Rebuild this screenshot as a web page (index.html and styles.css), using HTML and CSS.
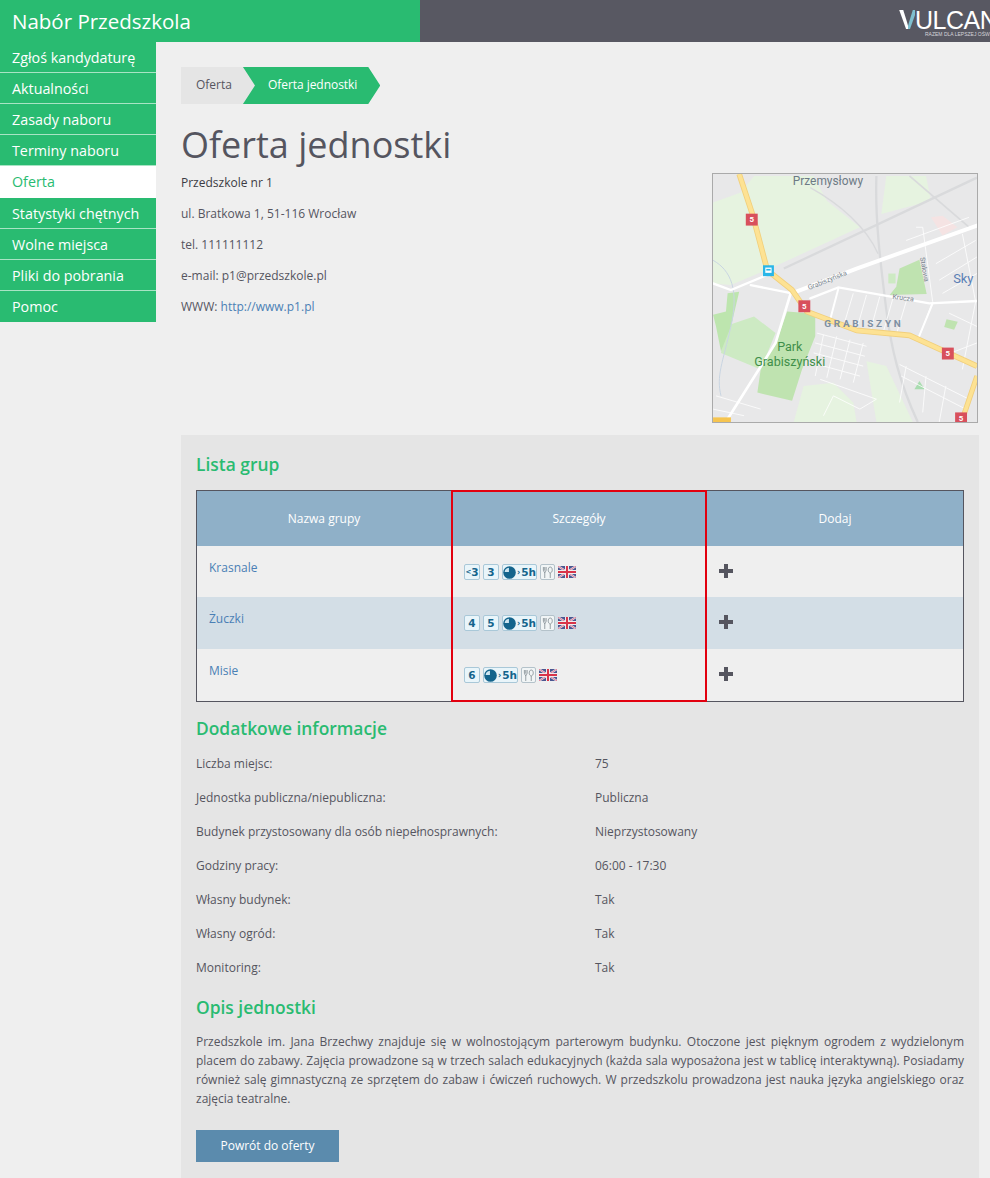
FILE: index.html
```html
<!DOCTYPE html>
<html lang="pl">
<head>
<meta charset="utf-8">
<title>Nabór Przedszkola</title>
<link rel="stylesheet" href="styles.css">
</head>
<body>
<header class="topbar">
  <div class="brand">Nabór Przedszkola</div>
  <div class="logo-area">
    <div class="logo">
      <div class="logo-word"><span class="logo-v">V</span>ULCAN</div>
      <div class="logo-tag">RAZEM DLA LEPSZEJ OŚWIATY</div>
    </div>
  </div>
</header>
<div class="main">
  <nav class="sidebar">
    <a class="nav-item">Zgłoś kandydaturę</a>
    <a class="nav-item">Aktualności</a>
    <a class="nav-item">Zasady naboru</a>
    <a class="nav-item">Terminy naboru</a>
    <a class="nav-item active">Oferta</a>
    <a class="nav-item">Statystyki chętnych</a>
    <a class="nav-item">Wolne miejsca</a>
    <a class="nav-item">Pliki do pobrania</a>
    <a class="nav-item">Pomoc</a>
  </nav>
  <main class="content">
    <div class="crumbs">
      <span class="crumb">Oferta</span>
      <span class="crumb current">Oferta jednostki</span>
    </div>
    <h1 class="page-title">Oferta jednostki</h1>
    <section class="info">
      <div class="info-text">
        <p class="unit-name">Przedszkole nr 1</p>
        <p>ul. Bratkowa 1, 51-116 Wrocław</p>
        <p>tel. 111111112</p>
        <p>e-mail: p1@przedszkole.pl</p>
        <p>WWW: <a class="link">http://www.p1.pl</a></p>
      </div>
      <svg class="map" viewBox="6 9 798 750" role="img" aria-label="Mapa">
        <rect x="6" y="9" width="798" height="750" fill="#e8e8e9"/>
        <path d="M6 95L90 65L130 15H310L350 90L450 170L200 285L60 345L6 340Z" fill="#e6f3e0"/>
        <path d="M530 15H650L665 90L515 130Z" fill="#e6f3e0"/>
        <path d="M280 650L370 640L430 700L440 759H250Z" fill="#e6f3e0"/>
        <path d="M470 575L530 590L610 759H500Z" fill="#e6f3e0"/>
        <path d="M40 470L130 440L195 490L150 600L30 550Z" fill="#cdeac3"/>
        <path d="M6 435L45 425L50 370L85 365L60 470L30 545L15 470Z" fill="#bde5ae"/>
        <path d="M230 425L315 432L315 500L275 600L245 695L140 670L150 600L200 510Z" fill="#bfe3b0"/>
        <path d="M570 295L630 268L652 372L540 375L560 350Z" fill="#bfe3b0"/>
        <path d="M536 310H558V340H536Z" fill="#cdeac3"/>
        <path d="M712 448L746 456L735 480L705 472Z" fill="#bfe3b0"/>
        <path d="M630 635L646 660H615Z" fill="#a9dcb0"/>
        <path d="M665 140L700 135L745 170L700 195Z" fill="#f5e3e3"/>
        <g fill="none" stroke="#d9dadc">
          <path d="M220 295L804 20" stroke-width="7"/>
          <path d="M500 15C495 150 515 300 530 420S570 640 625 759" stroke-width="7"/>
          <path d="M300 50C390 100 470 170 505 250" stroke-width="4"/>
          <path d="M600 15L780 170" stroke-width="5"/>
          <path d="M6 270C60 300 85 360 60 470S15 620 30 680" stroke="#c8d5e2" stroke-width="3"/>
        </g>
        <g class="map-minor">
          <path d="M320 490L470 530M315 520L465 560M310 550L460 590M305 580L450 620M340 495L315 620M380 500L350 625M420 510L390 630M460 520L430 640"/>
          <path d="M430 370L400 470M470 375L440 480M510 380L480 490M550 385L520 490M590 395L560 495"/>
          <path d="M570 585L780 690M575 620L770 720M590 590L570 700M650 620L640 730M710 650L690 759"/>
          <path d="M620 170L640 170L670 395L630 500M590 210L780 140M680 280L800 210M690 330L804 260M700 370L804 310M760 190L800 395L760 600M720 430L804 470M700 560L804 520"/>
          <path d="M330 630L500 690L450 720L370 680L340 740M15 680L150 720M6 720L100 740"/>
        </g>
        <g fill="none" stroke="#fff" stroke-linecap="round">
          <path d="M250 368L440 295L804 165" stroke-width="12"/>
          <path d="M300 385L385 352L660 400L804 393" stroke-width="7"/>
          <path d="M240 372L195 520L50 750" stroke-width="8"/>
          <path d="M6 340L60 360L175 312M120 345L245 370" stroke-width="7"/>
          <path d="M385 355L360 450" stroke-width="6"/>
          <path d="M670 400L625 510" stroke-width="6"/>
        </g>
        <g fill="none" stroke-linejoin="round">
          <path d="M85 9L125 130L170 300L245 360L290 425L440 482L600 497L804 590" stroke="#f1cf7c" stroke-width="17"/>
          <path d="M85 9L125 130L170 300L245 360L290 425L440 482L600 497L804 590" stroke="#fde293" stroke-width="12"/>
          <path d="M804 620L762 745" stroke="#f1cf7c" stroke-width="16"/>
          <path d="M804 620L762 745" stroke="#fde293" stroke-width="11"/>
        </g>
        <rect x="6" y="745" width="54" height="14" fill="#f6c44f"/>
        <rect x="157" y="285" width="33" height="33" fill="#29b6e8"/>
        <path d="M164 292H183V308H164Z" fill="#fff"/>
        <path d="M167 296H180V301H167Z" fill="#29b6e8"/>
        <g fill="#d8505c">
          <rect x="105" y="129" width="36" height="36"/>
          <rect x="264" y="391" width="36" height="36"/>
          <rect x="698" y="534" width="36" height="36"/>
          <rect x="738" y="730" width="36" height="29"/>
        </g>
        <g class="map-shield">
          <text x="123" y="155">5</text>
          <text x="282" y="417">5</text>
          <text x="716" y="560">5</text>
          <text x="756" y="755">5</text>
        </g>
        <text class="map-label" x="247" y="43">Przemysłowy</text>
        <text class="map-district" x="342" y="472">GRABISZYN</text>
        <text class="map-park" x="238" y="543" text-anchor="middle">Park</text>
        <text class="map-park" x="238" y="589" text-anchor="middle">Grabiszyński</text>
        <text class="map-sky" x="732" y="338">Sky</text>
        <text class="map-street" transform="translate(296 360) rotate(-22)">Grabiszyńska</text>
        <text class="map-street" transform="translate(548 386) rotate(8)">Krucza</text>
        <text class="map-street" transform="translate(632 262) rotate(80)">Stalowa</text>
      </svg>
    </section>
    <section class="panel">
      <h3 class="section-title first">Lista grup</h3>
      <div class="table-wrap">
        <table class="groups">
          <thead>
            <tr><th class="col-name">Nazwa grupy</th><th class="col-detail">Szczegóły</th><th class="col-add">Dodaj</th></tr>
          </thead>
          <tbody>
            <tr class="row-a">
              <td><a class="link">Krasnale</a></td>
              <td class="details-cell">
                <div class="badges">
                  <span class="badge age"><span class="lt">&lt;</span>3</span><span class="badge age">3</span>
                  <span class="badge hours"><svg class="pie" viewBox="0 0 12 12"><circle cx="6" cy="6" r="5.800" fill="#14648c"/><path d="M5.500 5.500H1.500A4.500 4.500 0 0 1 5.500 1.500Z" fill="#cfe6f1"/></svg><span class="gt">›</span>5h</span>
                  <span class="badge meal"><svg class="cutlery" viewBox="0 0 12 14"><path d="M1.500 1V4.500C1.500 6 3 6.500 3 7.500V13M4.500 1V4.500C4.500 6 3 6.500 3 7.500M3 1V5M9 1C7.200 1 6.800 3 6.800 4.500S8 7.500 9 7.500S11.200 6 11.200 4.500S10.800 1 9 1ZM9 7.500V13" fill="none" stroke="#8d979d" stroke-width="1"/></svg></span>
                  <svg class="flag" viewBox="0 0 18 12"><rect width="18" height="12" fill="#4a5690"/><path d="M0 0L18 12M18 0L0 12" stroke="#e8e8ee" stroke-width="2"/><path d="M0 0L18 12M18 0L0 12" stroke="#d46" stroke-width=".7"/><path d="M9 0V12M0 6H18" stroke="#eee" stroke-width="4"/><path d="M9 0V12M0 6H18" stroke="#d8344a" stroke-width="2"/></svg>
                </div>
              </td>
              <td><svg class="plus" viewBox="0 0 14 14"><path d="M5 0H9V5H14V9H9V14H5V9H0V5H5Z" fill="#55555f"/></svg></td>
            </tr>
            <tr class="alt">
              <td><a class="link">Żuczki</a></td>
              <td class="details-cell">
                <div class="badges">
                  <span class="badge age">4</span><span class="badge age">5</span>
                  <span class="badge hours"><svg class="pie" viewBox="0 0 12 12"><circle cx="6" cy="6" r="5.800" fill="#14648c"/><path d="M5.500 5.500H1.500A4.500 4.500 0 0 1 5.500 1.500Z" fill="#cfe6f1"/></svg><span class="gt">›</span>5h</span>
                  <span class="badge meal"><svg class="cutlery" viewBox="0 0 12 14"><path d="M1.500 1V4.500C1.500 6 3 6.500 3 7.500V13M4.500 1V4.500C4.500 6 3 6.500 3 7.500M3 1V5M9 1C7.200 1 6.800 3 6.800 4.500S8 7.500 9 7.500S11.200 6 11.200 4.500S10.800 1 9 1ZM9 7.500V13" fill="none" stroke="#8d979d" stroke-width="1"/></svg></span>
                  <svg class="flag" viewBox="0 0 18 12"><rect width="18" height="12" fill="#4a5690"/><path d="M0 0L18 12M18 0L0 12" stroke="#e8e8ee" stroke-width="2"/><path d="M0 0L18 12M18 0L0 12" stroke="#d46" stroke-width=".7"/><path d="M9 0V12M0 6H18" stroke="#eee" stroke-width="4"/><path d="M9 0V12M0 6H18" stroke="#d8344a" stroke-width="2"/></svg>
                </div>
              </td>
              <td><svg class="plus" viewBox="0 0 14 14"><path d="M5 0H9V5H14V9H9V14H5V9H0V5H5Z" fill="#55555f"/></svg></td>
            </tr>
            <tr>
              <td><a class="link">Misie</a></td>
              <td class="details-cell">
                <div class="badges">
                  <span class="badge age">6</span>
                  <span class="badge hours"><svg class="pie" viewBox="0 0 12 12"><circle cx="6" cy="6" r="5.800" fill="#14648c"/><path d="M5.500 5.500H1.500A4.500 4.500 0 0 1 5.500 1.500Z" fill="#cfe6f1"/></svg><span class="gt">›</span>5h</span>
                  <span class="badge meal"><svg class="cutlery" viewBox="0 0 12 14"><path d="M1.500 1V4.500C1.500 6 3 6.500 3 7.500V13M4.500 1V4.500C4.500 6 3 6.500 3 7.500M3 1V5M9 1C7.200 1 6.800 3 6.800 4.500S8 7.500 9 7.500S11.200 6 11.200 4.500S10.800 1 9 1ZM9 7.500V13" fill="none" stroke="#8d979d" stroke-width="1"/></svg></span>
                  <svg class="flag" viewBox="0 0 18 12"><rect width="18" height="12" fill="#4a5690"/><path d="M0 0L18 12M18 0L0 12" stroke="#e8e8ee" stroke-width="2"/><path d="M0 0L18 12M18 0L0 12" stroke="#d46" stroke-width=".7"/><path d="M9 0V12M0 6H18" stroke="#eee" stroke-width="4"/><path d="M9 0V12M0 6H18" stroke="#d8344a" stroke-width="2"/></svg>
                </div>
              </td>
              <td><svg class="plus" viewBox="0 0 14 14"><path d="M5 0H9V5H14V9H9V14H5V9H0V5H5Z" fill="#55555f"/></svg></td>
            </tr>
          </tbody>
        </table>
        <div class="highlight"></div>
      </div>
      <h3 class="section-title second">Dodatkowe informacje</h3>
      <dl class="details">
        <div class="detail"><dt>Liczba miejsc:</dt><dd>75</dd></div>
        <div class="detail"><dt>Jednostka publiczna/niepubliczna:</dt><dd>Publiczna</dd></div>
        <div class="detail"><dt>Budynek przystosowany dla osób niepełnosprawnych:</dt><dd>Nieprzystosowany</dd></div>
        <div class="detail"><dt>Godziny pracy:</dt><dd>06:00 - 17:30</dd></div>
        <div class="detail"><dt>Własny budynek:</dt><dd>Tak</dd></div>
        <div class="detail"><dt>Własny ogród:</dt><dd>Tak</dd></div>
        <div class="detail"><dt>Monitoring:</dt><dd>Tak</dd></div>
      </dl>
      <h3 class="section-title third">Opis jednostki</h3>
      <p class="description">Przedszkole im. Jana Brzechwy znajduje się w wolnostojącym parterowym budynku. Otoczone jest pięknym ogrodem z wydzielonym placem do zabawy. Zajęcia prowadzone są w trzech salach edukacyjnych (każda sala wyposażona jest w tablicę interaktywną). Posiadamy również salę gimnastyczną ze sprzętem do zabaw i ćwiczeń ruchowych. W przedszkolu prowadzona jest nauka języka angielskiego oraz zajęcia teatralne.</p>
      <a class="button">Powrót do oferty</a>
    </section>
  </main>
</div>
</body>
</html>
```

FILE: styles.css
```css
* { box-sizing: border-box; }
html, body { margin: 0; padding: 0; }
body {
  width: 990px;
  height: 1178px;
  overflow: hidden;
  background: #efefef;
  color: #55555f;
  font-family: "Open Sans", "Liberation Sans", sans-serif;
  font-size: 12px;
}
.topbar { display: flex; height: 42px; }
.brand {
  width: 420px;
  background: #29bb71;
  color: #fff;
  font-size: 20.500px;
  line-height: 42px;
  padding-left: 12px;
}
.logo-area {
  flex: 1;
  background: #585862;
  overflow: hidden;
  padding-left: 479px;
}
.logo { width: 110px; white-space: nowrap; color: #fff; }
.logo-word {
  font-family: "Liberation Sans", sans-serif;
  font-size: 25px;
  height: 31px;
  line-height: 26px;
  padding-top: 7px;
  letter-spacing: -.5px;
  overflow: hidden;
}
.logo-v {
  font-size: 27px;
  line-height: 24px;
  font-weight: 700;
  letter-spacing: -2px;
  color: transparent;
  background: linear-gradient(90deg, #fff 55%, #7fc0d0 55%);
  -webkit-background-clip: text;
  background-clip: text;
}
.logo-tag {
  font-family: "Liberation Sans", sans-serif;
  font-size: 5px;
  line-height: 6px;
  padding-left: 26px;
  color: #d5d5da;
}
.main { display: flex; }
.sidebar { width: 156px; flex: none; }
.nav-item {
  display: block;
  height: 31.120px;
  line-height: 31px;
  padding-left: 12px;
  background: #29bb71;
  color: #fff;
  font-size: 14.300px;
  border-bottom: 1px solid #a8e4c4;
}
.nav-item.active { background: #fff; color: #29bb71; border-bottom-color: #fff; }
.nav-item:last-child { border-bottom: 0; }
.content { flex: 1; padding: 25px 11px 0 25px; min-width: 0; }
.crumbs { display: flex; height: 37px; line-height: 36px; }
.crumb {
  background: #e5e5e5;
  padding: 0 23px 0 15px;
  margin-right: -12px;
}
.crumb.current {
  background: #29bb71;
  color: #fff;
  margin-right: 0;
  padding: 0 23px 0 25px;
  letter-spacing: -.05px;
  clip-path: polygon(0 0, calc(100% - 12px) 0, 100% 50%, calc(100% - 12px) 100%, 0 100%, 12px 50%);
}
.page-title {
  margin: 19px 0 7px;
  font-size: 36px;
  line-height: 43px;
  font-weight: 400;
  color: #55555f;
}
.info { display: flex; justify-content: space-between; height: 250px; margin-bottom: 12px; padding-right: 1px; }
.info-text { padding-top: 1px; }
.info-text p { margin: 0 0 14px; line-height: 17px; }
.info-text .unit-name { color: #3c3c44; }
.link { color: #4a7fb5; }
.map { width: 266px; height: 250px; border: 1px solid #aaa; display: block; }
.map-minor { fill: none; stroke: #fff; stroke-width: 3; opacity: .8; }
.map-shield text { fill: #fff; font: 700 24px Roboto, sans-serif; text-anchor: middle; }
.map-label { fill: #6d7a85; font: 400 36px Roboto, sans-serif; }
.map-district { fill: #7d8fa2; font: 700 30px Roboto, sans-serif; letter-spacing: 8.500px; }
.map-park { fill: #3f8f4a; font: 400 38px Roboto, sans-serif; }
.map-sky { fill: #5a7fb5; font: 400 39px Roboto, sans-serif; }
.map-street { fill: #75808a; font: 400 21px Roboto, sans-serif; }
.panel { background: #e5e5e5; padding: 15px 15px 16px; height: 743px; }
.section-title {
  color: #29bb71;
  font-size: 17.400px;
  line-height: 24px;
  font-weight: 600;
}
.section-title.first { margin: 2px 0 14px; }
.section-title.second { margin: 14px 0 6px; }
.section-title.third { margin: 11px 0 13px; }
.table-wrap { position: relative; }
.groups {
  width: 768px;
  height: 212px;
  border-collapse: separate;
  border-spacing: 0;
  table-layout: fixed;
  border: 1px solid #55555f;
  font-size: 12px;
}
.groups th {
  height: 55px;
  background: #8fb0c8;
  color: #fff;
  font-weight: 400;
  font-size: 12px;
  text-align: center;
}
.col-name { width: 254px; }
.col-detail { width: 256px; }
.col-add { width: 256px; }
.groups td {
  height: 52px;
  background: #efefef;
  padding: 13px 12px 0;
  vertical-align: top;
  line-height: 17px;
}
.groups .row-a td { height: 51px; }
.groups .alt td { background: #d3dee6; }
.groups td.details-cell { padding-left: 13px; }
.highlight {
  position: absolute;
  left: 255px;
  top: 0;
  width: 256px;
  height: 212px;
  border: 2px solid #e2000f;
}
.badges { display: flex; align-items: center; gap: 3px; padding-top: 5px; }
.badge {
  display: flex;
  align-items: center;
  justify-content: center;
  height: 16px;
  background: #e9f5fa;
  border: 1px solid #a9c8d8;
  border-radius: 2px;
  color: #14648c;
  font: 700 10.500px "DejaVu Sans", sans-serif;
}
.badge.age { width: 16px; }
.lt { font-size: 7px; }
.badge.hours { width: 35px; }
.badge.meal { width: 15px; background: #f1f5f6; border-color: #b4c2ca; }
.pie { width: 13px; height: 13px; margin-right: 1px; flex: none; }
.gt { font-size: 8px; margin-right: 1px; }
.cutlery { width: 11px; height: 13px; }
.flag { width: 18px; height: 12px; }
.plus { display: block; width: 14px; height: 14px; margin-top: 5px; }
.details { margin: 0; }
.detail { display: flex; height: 34px; align-items: center; }
.detail dt { width: 399px; }
.detail dd { margin: 0; }
.description {
  margin: 0 0 22px;
  line-height: 19px;
  text-align: justify;
}
.button {
  display: block;
  width: 143px;
  height: 32px;
  line-height: 32px;
  text-align: center;
  background: #5b8bad;
  color: #fff;
}
```
